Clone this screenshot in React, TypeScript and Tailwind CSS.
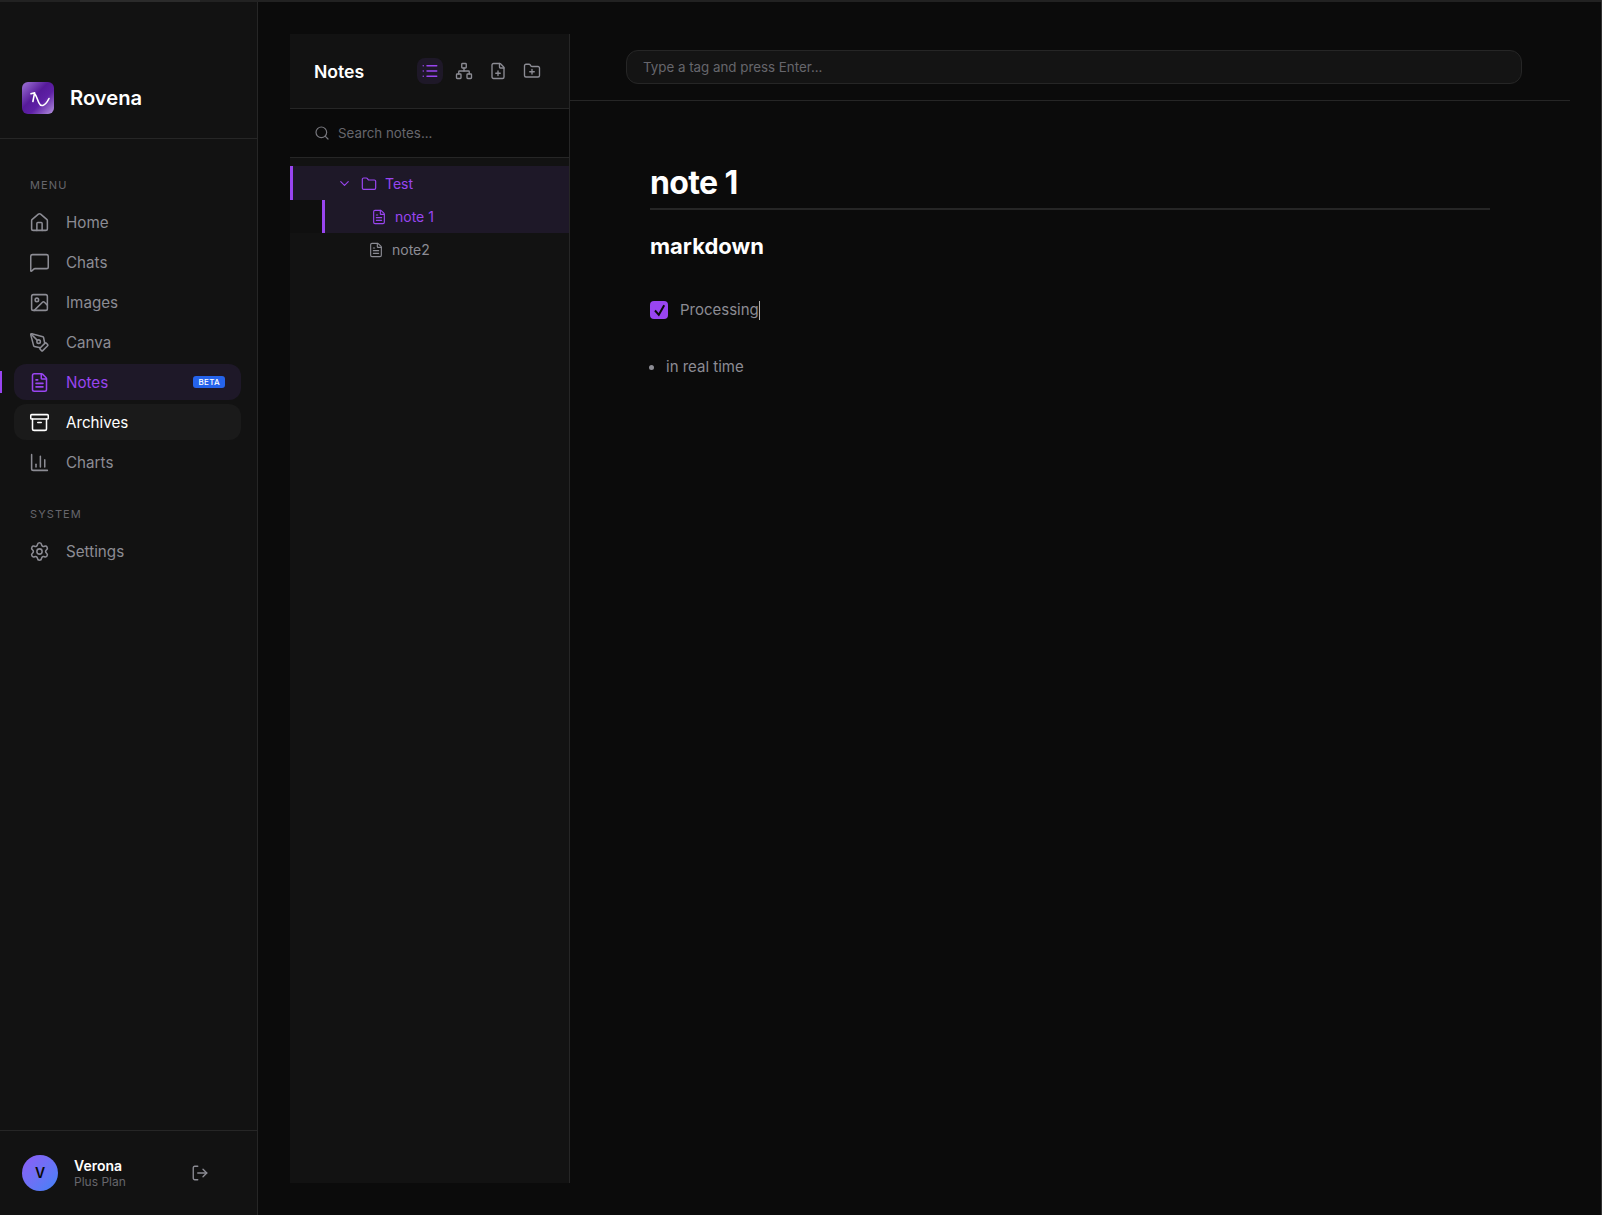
import React from 'react';
import {
  Archive,
  ChartColumn,
  ChevronDown,
  FilePlus,
  FileText,
  Folder,
  FolderPlus,
  House,
  Image,
  List,
  LogOut,
  MessageSquare,
  Network,
  PenTool,
  Search,
  Settings,
} from 'lucide-react';

const font = { fontFamily: 'Inter, "Noto Sans", sans-serif' };

// Left navigation entries
const menuItems = [
  { label: 'Home', icon: House },
  { label: 'Chats', icon: MessageSquare },
  { label: 'Images', icon: Image },
  { label: 'Canva', icon: PenTool },
  { label: 'Notes', icon: FileText, active: true },
  { label: 'Archives', icon: Archive, hovered: true },
  { label: 'Charts', icon: ChartColumn },
];

const NavItem: React.FC<{
  label: string;
  icon: React.ElementType;
  active?: boolean;
  hovered?: boolean;
}> = ({ label, icon: Icon, active, hovered }) => (
  <div
    className={`relative mx-[14px] flex h-9 w-[227px] items-center rounded-xl pl-[15px] text-[15.2px] ${
      active
        ? 'bg-[#1e1828] text-[#9945f0]'
        : hovered
          ? 'bg-[#1a1a1a] text-white'
          : 'text-[#8c8c94]'
    }`}
  >
    {active && <span className="absolute left-[-14px] top-[7px] h-[22px] w-[2px] bg-[#9945f0]" />}
    <Icon size={21} strokeWidth={1.75} />
    <span className="ml-[16px] pt-[2px]">{label}</span>
    {active && (
      <span className="ml-auto mr-[16px] rounded-[3px] bg-[#2563eb] px-[5px] text-[8px] font-medium leading-[12px] tracking-[0.04em] text-white">
        BETA
      </span>
    )}
  </div>
);

const Sidebar = () => (
  <aside className="flex w-[258px] shrink-0 flex-col border-r border-[#262626] bg-[#121212]">
    {/* Logo */}
    <div className="flex h-[137px] shrink-0 items-end border-b border-[#262626] pb-[24px] pl-[22px]">
      <div className="flex items-center">
        <svg width="32" height="32" viewBox="0 0 32 32" className="rounded-[6px]">
          <defs>
            <linearGradient id="logo" x1="0" y1="0" x2="1" y2="1">
              <stop offset="0" stopColor="#a075d8" />
              <stop offset="0.42" stopColor="#561a9a" />
              <stop offset="0.62" stopColor="#5e20a6" />
              <stop offset="1" stopColor="#b594de" />
            </linearGradient>
          </defs>
          <rect width="32" height="32" fill="url(#logo)" />
          <path
            d="M9 11.8L12.6 10.8L10.9 19.5M13 12C14.5 14 15.5 18 17 21C18.5 24.5 22.5 25.5 27 16.5"
            fill="none"
            stroke="white"
            strokeWidth="1.6"
            strokeLinecap="round"
            strokeLinejoin="round"
          />
        </svg>
        <span className="ml-[16px] text-[20.2px] font-semibold text-white">Rovena</span>
      </div>
    </div>

    {/* Navigation */}
    <div className="flex-1 pt-[39px]">
      <div className="mb-[12px] pl-[30px] text-[11px] leading-[14px] tracking-[0.1em] text-[#66666c]">MENU</div>
      <div className="flex flex-col gap-1">
        {menuItems.map((item) => (
          <NavItem key={item.label} {...item} />
        ))}
      </div>
      <div className="mb-[12px] mt-[27px] pl-[30px] text-[11px] leading-[14px] tracking-[0.1em] text-[#66666c]">SYSTEM</div>
      <NavItem label="Settings" icon={Settings} />
    </div>

    {/* User */}
    <div className="flex h-[85px] shrink-0 items-center border-t border-[#262626] pl-[22px]">
      <div className="flex h-9 w-9 items-center justify-center rounded-full bg-gradient-to-br from-[#8b5cf6] to-[#3b82f6] text-sm font-semibold text-[#0a0a0a]">
        V
      </div>
      <div className="ml-[16px] w-[117px] pt-[2px]">
        <div className="text-sm font-semibold leading-[16px] text-white">Verona</div>
        <div className="text-xs leading-[16px] text-[#66666c]">Plus Plan</div>
      </div>
      <LogOut size={18} strokeWidth={1.8} className="text-[#8c8c94]" />
    </div>
  </aside>
);

const NotesPanel = () => (
  <section className="flex w-[280px] shrink-0 flex-col border-r border-[#262626] bg-[#121212]">
    <div className="flex h-[75px] shrink-0 items-center border-b border-[#262626] pl-[24px] pt-[2px]">
      <span className="text-[17.6px] font-semibold text-white">Notes</span>
      <div className="ml-[53px] mt-[-2px] flex items-center gap-[8px] text-[#8c8c94]">
        <div className="flex h-[26px] w-[26px] items-center justify-center rounded-lg bg-[#1e1828] text-[#9945f0]">
          <List size={18} strokeWidth={1.9} />
        </div>
        <div className="flex h-[26px] w-[26px] items-center justify-center">
          <Network size={18} strokeWidth={1.8} />
        </div>
        <div className="flex h-[26px] w-[26px] items-center justify-center">
          <FilePlus size={18} strokeWidth={1.8} />
        </div>
        <div className="flex h-[26px] w-[26px] items-center justify-center">
          <FolderPlus size={18} strokeWidth={1.8} />
        </div>
      </div>
    </div>

    <div className="flex h-[49px] shrink-0 items-center border-b border-[#262626] bg-[#0a0a0a] pl-[24px]">
      <Search size={16} strokeWidth={1.8} className="text-[#77777d]" />
      <span className="ml-[8px] pt-[2px] text-[13.33px] text-[#66666c]">Search notes...</span>
    </div>

    {/* Tree */}
    <div className="pt-[8px] text-sm">
      <div className="flex h-[34px] items-center border-l-[3px] border-[#9945f0] bg-[#1e1828] pl-[44px] pt-[1px] text-[#9945f0]">
        <ChevronDown size={15} strokeWidth={1.8} />
        <Folder size={16} strokeWidth={1.8} className="ml-[9px]" />
        <span className="ml-[8px]">Test</span>
      </div>
      <div className="flex">
        <div className="w-[32px] shrink-0 bg-[#0f0f0f]" />
        <div className="flex h-[33px] flex-1 items-center border-l-[3px] border-[#9945f0] bg-[#1e1828] pl-[46px] text-[#9945f0]">
          <FileText size={16} strokeWidth={1.7} />
          <span className="ml-[8px]">note 1</span>
        </div>
      </div>
      <div className="flex h-[33px] items-center pl-[78px] text-[#8c8c94]">
        <FileText size={16} strokeWidth={1.7} />
        <span className="ml-[8px]">note2</span>
      </div>
    </div>
  </section>
);

const Editor = () => (
  <main className="flex w-[1000px] flex-col">
    <div className="flex h-[67px] shrink-0 border-b border-[#262626] pl-[56px] pt-[16px]">
      <div className="flex h-[34px] w-[896px] items-center rounded-xl border border-[#262626] bg-[#141414] pl-[16px] pt-[2px] text-[13.33px] text-[#66666c]">
        Type a tag and press Enter...
      </div>
    </div>
    <div className="pl-[80px] pr-[80px]">
      <h1 className="mt-[60px] border-b-2 border-[#262626] pb-[3px] text-[32px] font-bold leading-[44px] tracking-[-0.02em] text-white">
        note 1
      </h1>
      <h2 className="mt-[18px] text-[22px] font-bold leading-[36px] text-white">markdown</h2>
      <div className="mt-[34px] flex h-[24px] items-center text-[15px] text-[#8c8c94]">
        <span className="flex h-[18px] w-[18px] items-center justify-center rounded-[4px] bg-[#9945f0]">
          <svg width="18" height="18" viewBox="0 0 18 18" fill="none">
            <path d="M5 9.5L8.8 13.8L14.2 4.3" stroke="#0a0a0a" strokeWidth="2" />
          </svg>
        </span>
        <span className="ml-[12px]">Processing</span>
        <span className="h-[19px] w-px bg-[#b0b0b0]" />
      </div>
      <div className="mt-[33px] flex h-[24px] items-center text-[15px] text-[#8c8c94]">
        <span className="ml-[-1px] h-[5px] w-[5px] rounded-full bg-[#8c8c94]" />
        <span className="ml-[12px]">in real time</span>
      </div>
    </div>
  </main>
);

export default function App() {
  return (
    <div style={font} className="flex h-[1215px] w-[1602px] flex-col overflow-hidden border-r border-[#333333] bg-[#0b0b0b]">
      {/* Top edge of the window */}
      <div className="flex h-[2px] shrink-0 bg-[#222222]">
        <div className="ml-[80px] w-[120px] bg-[#2b2b2b]" />
      </div>
      <div className="flex min-h-0 flex-1">
        <Sidebar />
        <div className="flex min-w-0 flex-1 pb-[32px] pl-[32px] pt-[32px]">
          <NotesPanel />
          <Editor />
        </div>
      </div>
    </div>
  );
}
